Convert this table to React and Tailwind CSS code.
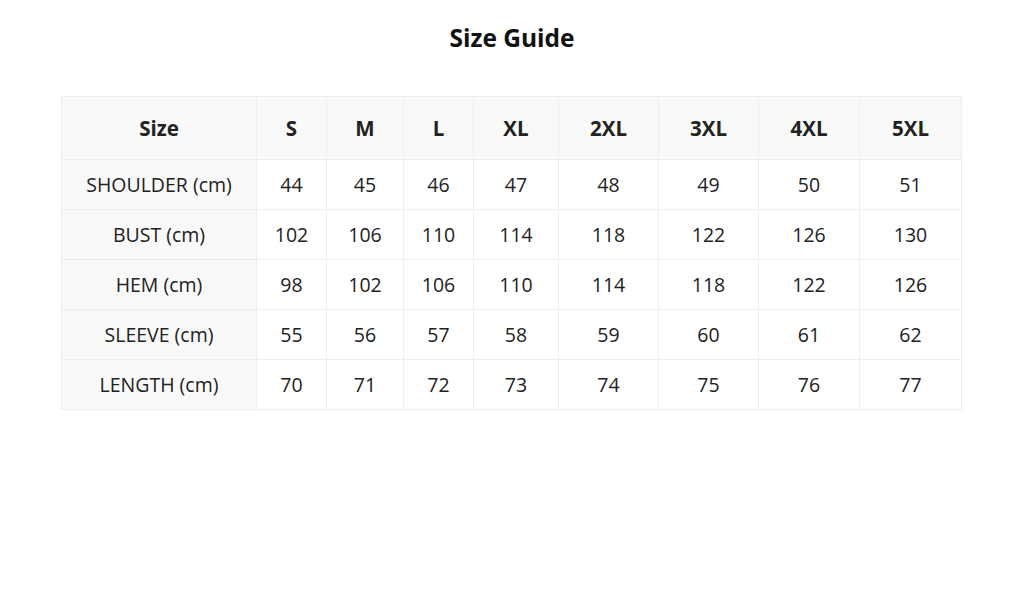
const SIZES = ['S', 'M', 'L', 'XL', '2XL', '3XL', '4XL', '5XL']
const WIDTHS = ['w-[195px]', 'w-[70px]', 'w-[77px]', 'w-[70px]', 'w-[85px]', 'w-[100px]', 'w-[100px]', 'w-[101px]', 'w-[102px]']

const ROWS = [
  { label: 'SHOULDER (cm)', values: [44, 45, 46, 47, 48, 49, 50, 51] },
  { label: 'BUST (cm)', values: [102, 106, 110, 114, 118, 122, 126, 130] },
  { label: 'HEM (cm)', values: [98, 102, 106, 110, 114, 118, 122, 126] },
  { label: 'SLEEVE (cm)', values: [55, 56, 57, 58, 59, 60, 61, 62] },
  { label: 'LENGTH (cm)', values: [70, 71, 72, 73, 74, 75, 76, 77] },
]

export default function App() {
  return (
    <div className="min-h-[602px] bg-white font-['Open_Sans',sans-serif] text-[#222]">
      <h1 className="pt-[21px] text-center text-[24.5px] font-bold leading-[34px] text-[#111]">Size Guide</h1>
      <div className="mt-[41px] pl-[61px]">
        <table className="table-fixed border-collapse text-center">
          <colgroup>
            {WIDTHS.map((w, i) => (
              <col key={i} className={w} />
            ))}
          </colgroup>
          <thead>
            <tr className="h-[63px] bg-[#f9f9f9]">
              <th className="border border-[#eeeeee] text-[20.5px] font-bold">Size</th>
              {SIZES.map((s) => (
                <th key={s} className="border border-[#eeeeee] text-[20.5px] font-bold">
                  {s}
                </th>
              ))}
            </tr>
          </thead>
          <tbody>
            {ROWS.map((row) => (
              <tr key={row.label} className="h-[50px]">
                <td className="border border-[#eeeeee] bg-[#f9f9f9] text-[19.5px]">{row.label}</td>
                {row.values.map((v, i) => (
                  <td key={i} className="border border-[#eeeeee] text-[19.5px]">
                    {v}
                  </td>
                ))}
              </tr>
            ))}
          </tbody>
        </table>
      </div>
    </div>
  )
}
